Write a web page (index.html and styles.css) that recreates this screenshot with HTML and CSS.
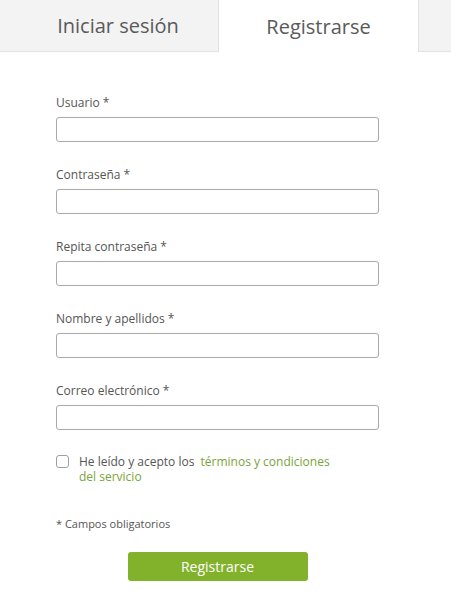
FILE: index.html
```html
<!DOCTYPE html>
<html lang="es">
<head>
  <meta charset="UTF-8">
  <meta name="viewport" content="width=device-width, initial-scale=1.0">
  <title>Registrarse</title>
  <link rel="stylesheet" href="styles.css">
</head>
<body>
  <div class="tabs">
    <div class="tab">Iniciar sesión</div>
    <div class="tab active">Registrarse</div>
    <div class="tab-rest"></div>
  </div>

  <form class="register-form">
    <div class="field">
      <label for="user">Usuario *</label>
      <input type="text" id="user">
    </div>
    <div class="field">
      <label for="pass">Contraseña *</label>
      <input type="password" id="pass">
    </div>
    <div class="field">
      <label for="pass2">Repita contraseña *</label>
      <input type="password" id="pass2">
    </div>
    <div class="field">
      <label for="fullname">Nombre y apellidos *</label>
      <input type="text" id="fullname">
    </div>
    <div class="field">
      <label for="email">Correo electrónico *</label>
      <input type="email" id="email">
    </div>

    <div class="terms">
      <input type="checkbox" id="accept">
      <label for="accept">He leído y acepto los <a href="#">términos y condiciones del servicio</a></label>
    </div>

    <p class="required-note">* Campos obligatorios</p>

    <div class="actions">
      <button type="button">Registrarse</button>
    </div>
  </form>
</body>
</html>
```

FILE: styles.css
```css
body { margin: 0; font-family: "Open Sans", "Liberation Sans", sans-serif; color: #555; background: #fff; }
.tabs { display: flex; height: 51px; background: #f3f3f3; border-bottom: 1px solid #e2e2e2; padding-left: 18px; }
.tab { width: 200px; display: flex; align-items: center; justify-content: center; font-size: 20px; color: #5a5a5a; border-right: 1px solid #e2e2e2; }
.tab.active { background: #fff; height: 52px; width: 199px; }
.tab-rest { flex: 1; }
.register-form { padding: 43px 0 0 56px; width: 323px; }
.field { margin-bottom: 25px; }
.field label { display: block; font-size: 12px; line-height: 16px; margin-bottom: 6px; color: #555; }
.field input { display: block; box-sizing: border-box; width: 323px; height: 25px; border: 1px solid #a9a9a9; border-radius: 3px; padding: 2px 6px; font-size: 12px; }
.terms { display: flex; align-items: flex-start; margin-top: 3px; }
.terms input { appearance: none; -webkit-appearance: none; margin: 0 10px 0 0; width: 13px; height: 13px; border: 1px solid #a0a0a0; border-radius: 3px; background: #fff; flex-shrink: 0; }
.terms label { font-size: 12px; line-height: 15px; color: #555; width: 252px; margin-top: -1px; }
.terms a { color: #7aa33a; text-decoration: none; margin-left: 3px; }
.required-note { font-size: 11px; margin: 32px 0 0; line-height: 15px; color: #555; }
.actions { display: flex; justify-content: center; margin-top: 21px; }
.actions button { width: 180px; height: 29px; background: #82b22c; color: #fff; border: none; border-radius: 3px; font-family: inherit; font-size: 14px; cursor: pointer; }
```
